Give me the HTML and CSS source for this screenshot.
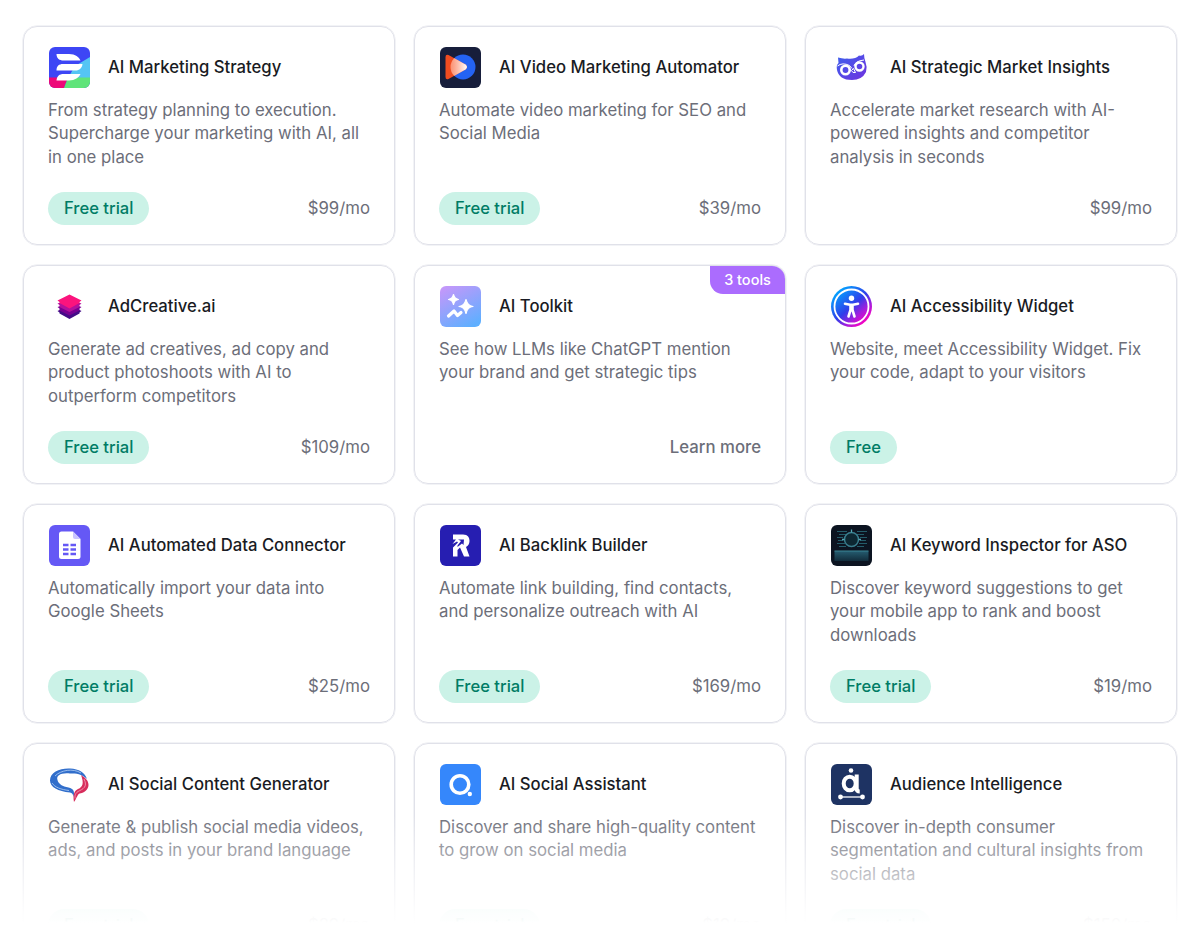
FILE: index.html
```
<!DOCTYPE html>
<html lang="en">
<head>
<meta charset="utf-8">
<title>AI apps</title>
<link rel="stylesheet" href="styles.css">
</head>
<body>
<main class="catalog">
  <article class="card">
    <header class="head">
      <svg class="icon" viewBox="0 0 42 42"><defs><clipPath id="r1"><rect x="1" y="1" width="41" height="41" rx="6"/></clipPath></defs><g clip-path="url(#r1)"><path fill="#3d46f5" d="M0 0h42v42H0z"/><path fill="#55c5f4" d="M42 11L27 20 20 32h22z"/><path fill="#ed0878" d="M0 31.500h20L16 42H0z"/><path fill="#5fe47a" d="M20 31.500h22V42H16z"/></g><path fill="#fff" d="M8.500 8H21C27.500 8 31 11 32.500 14.500H15.500C11.500 14.500 8.500 12.500 8.500 8zM8.500 24.500C8.500 20 11 18 15 18H34.500C34 22 31.500 24.500 27.500 24.500zM8.500 34.500C9 30 11.500 28 15.500 28H32.500C31 31.500 27 34.500 21 34.500z"/></svg>
      <h2 class="title">AI Marketing Strategy</h2>
    </header>
    <p class="text">From strategy planning to execution.<br>Supercharge your marketing with AI, all<br>in one place</p>
    <footer class="foot"><span class="pill">Free trial</span><span class="price">$99/mo</span></footer>
  </article>
  <article class="card">
    <header class="head">
      <svg class="icon" viewBox="0 0 42 42"><defs><linearGradient id="v1"><stop offset="0" stop-color="#ff8a65" stop-opacity=".7"/><stop offset="1" stop-color="#fff"/></linearGradient><clipPath id="v2"><circle cx="24" cy="21" r="12.500"/></clipPath></defs><rect x="1" y="1" width="41" height="41" rx="6" fill="#171e3b"/><circle cx="24" cy="21" r="12.500" fill="#2463f3"/><path fill="#f04c20" d="M6.500 11q0-3 3-2l17 9.500q3 2.500 0 5L9.500 33q-3 1-3-2z"/><path fill="url(#v1)" clip-path="url(#v2)" d="M6.500 11q0-3 3-2l17 9.500q3 2.500 0 5L9.500 33q-3 1-3-2z"/></svg>
      <h2 class="title">AI Video Marketing Automator</h2>
    </header>
    <p class="text">Automate video marketing for SEO and<br>Social Media</p>
    <footer class="foot"><span class="pill">Free trial</span><span class="price">$39/mo</span></footer>
  </article>
  <article class="card">
    <header class="head">
      <svg class="icon" viewBox="0 0 42 42"><defs><linearGradient id="o1" x1="0" y1="0" x2="1" y2="1"><stop offset="0" stop-color="#3b61ed"/><stop offset="1" stop-color="#7131df"/></linearGradient></defs><path fill="url(#o1)" d="M8 11.500q5 1.500 9 1 8 1 12-3 3 1 5-1.500 0 4 1.500 8 2 5 .500 10-4 8-14 8Q9 34 7 24q-1-5 1.500-7z"/><g fill="none" stroke="#fff"><circle cx="15.500" cy="24" r="4.200" stroke-width="2.600"/><circle cx="29.500" cy="20.500" r="4" stroke-width="2.400"/><path stroke-width="1" d="M7.500 20q5-4 12-.500l2.500 3M24 20q1-5 10-6M21.500 24.500l2-2 2 4q-3 1-4-2z"/></g></svg>
      <h2 class="title">AI Strategic Market Insights</h2>
    </header>
    <p class="text">Accelerate market research with AI-<br>powered insights and competitor<br>analysis in seconds</p>
    <footer class="foot"><span class="price">$99/mo</span></footer>
  </article>

  <article class="card">
    <header class="head">
      <svg class="icon" viewBox="0 0 42 42"><path fill="#440b87" d="M9.500 26l2-1 10-5 10 5 2 1-2 1.500v1l-10 5.500-10-5.500v-1z"/><path fill="#790092" d="M9.500 22l12-4 12 4-2 1.500v2l-10 5-10-5v-2z"/><path fill="#b3109c" d="M9.500 18.500l12-4 12 4-2 1.500v2l-10 5-10-5v-2z"/><path fill="#fb147d" d="M21.500 9.500l12 6-2 1.500v1l-10 5.500-10-5.500v-1l-2-1.500z"/></svg>
      <h2 class="title">AdCreative.ai</h2>
    </header>
    <p class="text">Generate ad creatives, ad copy and<br>product photoshoots with AI to<br>outperform competitors</p>
    <footer class="foot"><span class="pill">Free trial</span><span class="price">$109/mo</span></footer>
  </article>
  <article class="card">
    <span class="badge">3 tools</span>
    <header class="head">
      <svg class="icon" viewBox="0 0 42 42"><defs><linearGradient id="t1" x1=".2" y1="0" x2=".75" y2="1"><stop offset="0" stop-color="#c298fa"/><stop offset="1" stop-color="#5eafff"/></linearGradient></defs><rect x="1" y="1" width="41" height="41" rx="6" fill="url(#t1)"/><path fill="#fff" stroke="#fff" stroke-width="1.200" stroke-linejoin="round" d="M14.500 9.500q1 4.500 5 5-4 .500-5 5-1-4.500-5-5 4-.500 5-5zM27 14.500q1.500 6.500 7 7-5.500 .500-7 7-1.500-6.500-7-7 5.500-.500 7-7z"/><path fill="none" stroke="#fff" stroke-width="3.200" stroke-linecap="round" stroke-linejoin="round" d="M9.500 31l5.500-5 3.500 4.500 3.500-3"/></svg>
      <h2 class="title">AI Toolkit</h2>
    </header>
    <p class="text">See how LLMs like ChatGPT mention<br>your brand and get strategic tips</p>
    <footer class="foot"><span class="price learn">Learn more</span></footer>
  </article>
  <article class="card">
    <header class="head">
      <svg class="icon" viewBox="0 0 42 42"><defs><linearGradient id="a1" x1=".15" y1=".1" x2=".85" y2=".9"><stop offset="0" stop-color="#00a8ff"/><stop offset=".5" stop-color="#303eea"/><stop offset=".75" stop-color="#a81ddd"/><stop offset="1" stop-color="#ff00bd"/></linearGradient></defs><circle cx="21.500" cy="21.500" r="20.500" fill="url(#a1)"/><circle cx="21.500" cy="21.500" r="17" fill="none" stroke="#fff" stroke-width="1.800"/><circle cx="21.500" cy="13.300" r="2.700" fill="#fff"/><path fill="none" stroke="#fff" stroke-width="2.600" stroke-linecap="round" stroke-linejoin="round" d="M15 18.700l5 1h3l5-1M20.500 20v5l-2 6.500M22.500 20v5l2 6.500M21.500 20v5"/></svg>
      <h2 class="title">AI Accessibility Widget</h2>
    </header>
    <p class="text">Website, meet Accessibility Widget. Fix<br>your code, adapt to your visitors</p>
    <footer class="foot"><span class="pill">Free</span></footer>
  </article>

  <article class="card">
    <header class="head">
      <svg class="icon" viewBox="0 0 42 42"><rect x="1" y="1" width="41" height="41" rx="6" fill="#6558f5"/><path fill="#fff" d="M13.500 7.500H25l7.500 7.500v17.500q0 2.500-2.500 2.500H13.500q-2.500 0-2.500-2.500V10q0-2.500 2.500-2.500z"/><path fill="#c9c4ff" d="M25 7.500v5.500q0 2 2 2h5.500z"/><path fill="none" stroke="#6558f5" stroke-width="2.300" d="M15 21h5.500M22.500 21H28M15 25.500h5.500M22.500 25.500H28M15 30h5.500M22.500 30H28"/></svg>
      <h2 class="title">AI Automated Data Connector</h2>
    </header>
    <p class="text">Automatically import your data into<br>Google Sheets</p>
    <footer class="foot"><span class="pill">Free trial</span><span class="price">$25/mo</span></footer>
  </article>
  <article class="card">
    <header class="head">
      <svg class="icon" viewBox="0 0 42 42"><rect x="1" y="1" width="41" height="41" rx="6" fill="#261eb1"/><path fill="#fff" d="M14 10.500h10c5 0 6.500 3 6.500 6.500 0 3-1.500 5-3.500 6l3.500 9.500H25L21 23.500 18.500 26v6.500H14v-9l5-5-1-1-4.500 2.500 3.500-4.500h-3z"/><path fill="#261eb1" d="M19 15.500h6l-.500 5.500-1.500-1.500-4.500 3.500v-1.500l3.500-4.500z"/></svg>
      <h2 class="title">AI Backlink Builder</h2>
    </header>
    <p class="text">Automate link building, find contacts,<br>and personalize outreach with AI</p>
    <footer class="foot"><span class="pill">Free trial</span><span class="price">$169/mo</span></footer>
  </article>
  <article class="card">
    <header class="head">
      <svg class="icon" viewBox="0 0 42 42"><defs><linearGradient id="k1" x1="0" y1="0" x2="0" y2="1"><stop offset="0" stop-color="#255c70"/><stop offset="1" stop-color="#122c3b"/></linearGradient></defs><rect x="1" y="1" width="41" height="41" rx="6" fill="#0c1421"/><path stroke="#245c6a" stroke-width="1" d="M7 7.500h10M27 7.500h10M9 10.500h8M27 10.500h7M7 13.500h6M30 13.500h7M8 16.500h5M30 16.500h6M7 19.500h8M29 19.500h8M9 22.500h7M27 22.500h7"/><path fill="url(#k1)" d="M4.500 27h34v10h-34z"/><path stroke="#3a8494" d="M4.500 27h34"/><circle cx="21.500" cy="15.500" r="7" fill="#0d2732" stroke="#397d8d" stroke-width="1.500"/><path stroke="#53a5b2" stroke-width="1.300" d="M21.500 5.500v3M12 15.500h2.500M28.500 15.500H31"/></svg>
      <h2 class="title">AI Keyword Inspector for ASO</h2>
    </header>
    <p class="text">Discover keyword suggestions to get<br>your mobile app to rank and boost<br>downloads</p>
    <footer class="foot"><span class="pill">Free trial</span><span class="price">$19/mo</span></footer>
  </article>

  <article class="card">
    <header class="head">
      <svg class="icon" viewBox="0 0 42 42"><path fill="#316ecb" d="M22 29.500C10 28.500 2 24 2 17.500 2 9 12 5 22 5.500c9 .500 15 4 17 10.500-4-4-9-6-17-5.500C13 9.500 8 12.500 9.500 17c1 4 5 6.500 11 7.500 5 1 6.500 4 5 9.500-.500-3-1.500-4-3.500-4.500z"/><path fill="none" stroke="#b4d0f5" stroke-width=".800" d="M4 20c3 4.500 9 6.500 17 7.500M7 13c6-6 18-8 26-3"/><path fill="#d72d5c" d="M33 12c5 3 7.500 6 7.500 10 0 5-5 8-9 8.500-2 1-2.500 4-5.500 8.500-1-6-.500-11 4-13 5-2 6-6 3-14z"/><path fill="none" stroke="#f3a4bb" stroke-width=".800" d="M36 16c4 8-1 10-6 12.500-3 2-3 4-3 7"/></svg>
      <h2 class="title">AI Social Content Generator</h2>
    </header>
    <p class="text">Generate &amp; publish social media videos,<br>ads, and posts in your brand language</p>
    <footer class="foot"><span class="pill">Free trial</span><span class="price">$29/mo</span></footer>
  </article>
  <article class="card">
    <header class="head">
      <svg class="icon" viewBox="0 0 42 42"><rect x="1" y="1" width="41" height="41" rx="6" fill="#3587fb"/><circle cx="21" cy="21.500" r="8.800" fill="none" stroke="#fff" stroke-width="3.600"/><circle cx="30.800" cy="31" r="2.200" fill="#fff"/></svg>
      <h2 class="title">AI Social Assistant</h2>
    </header>
    <p class="text">Discover and share high-quality content<br>to grow on social media</p>
    <footer class="foot"><span class="pill">Free trial</span><span class="price">$19/mo</span></footer>
  </article>
  <article class="card">
    <header class="head">
      <svg class="icon" viewBox="0 0 42 42"><rect x="1" y="1" width="41" height="41" rx="6" fill="#1e3363"/><g fill="none" stroke="#fff"><ellipse cx="19.700" cy="20.500" rx="6" ry="6.800" stroke-width="4"/><path stroke-width="4" d="M26.700 11.500v14q0 3 3 3"/><path stroke-width="1.300" d="M10.500 34h22"/></g><g fill="#fff"><circle cx="21" cy="7.500" r="2.300"/><circle cx="10.500" cy="34" r="2.400"/><circle cx="32.500" cy="34" r="2.400"/></g></svg>
      <h2 class="title">Audience Intelligence</h2>
    </header>
    <p class="text">Discover in-depth consumer<br>segmentation and cultural insights from<br>social data</p>
    <footer class="foot"><span class="pill">Free trial</span><span class="price">$150/mo</span></footer>
  </article>
  <div class="fade"></div>
</main>
</body>
</html>
```
FILE: styles.css
```
* { box-sizing: border-box; }
body {
  margin: 0;
  background: #fff;
  font-family: Inter, sans-serif;
  font-size: 16.75px;
  line-height: 23.3px;
  color: #6c6e79;
}
.catalog {
  position: relative;
  height: 936px;
  overflow: hidden;
  display: grid;
  grid-template-columns: repeat(3, 372px);
  grid-auto-rows: 219px;
  gap: 20px 19px;
  padding: 26px 23px 0;
}
.card {
  position: relative;
  display: flex;
  flex-direction: column;
  padding: 19px 24px 19px 24px;
  border: 1px solid #e0e1e9;
  border-radius: 14px;
  box-shadow: 0 0 0 0.5px #e6e7ed;
}
.head { display: flex; align-items: center; gap: 18px; }
.icon { width: 42px; height: 42px; flex: none; }
.title {
  margin: 0;
  padding-top: 1px;
  font-size: 16.7px;
  font-weight: 500;
  color: #191b23;
  white-space: nowrap;
}
.text { margin: 11px 0 0; white-space: nowrap; }
.foot {
  margin-top: auto;
  height: 33px;
  display: flex;
  align-items: center;
}
.pill {
  height: 33px;
  padding: 0 16px;
  border-radius: 17px;
  background: #cbf2e7;
  color: #007c65;
  font-size: 16.6px;
  font-weight: 500;
  line-height: 32.5px;
}
.price { margin-left: auto; }
.learn { font-weight: 500; }
.badge {
  position: absolute;
  top: 0;
  right: 0;
  width: 75px;
  height: 28px;
  border-radius: 0 13px 0 13px;
  background: #ab6cfe;
  color: #fff;
  font-size: 14.5px;
  font-weight: 500;
  line-height: 28px;
  text-align: center;
}
.fade {
  position: absolute;
  left: 0;
  right: 0;
  bottom: 0;
  height: 122px;
  background: linear-gradient(to bottom, rgba(255, 255, 255, 0), rgba(255, 255, 255, 0.95) 82%, rgba(255, 255, 255, 0.97) 87%, #fff 89%);
}
```
